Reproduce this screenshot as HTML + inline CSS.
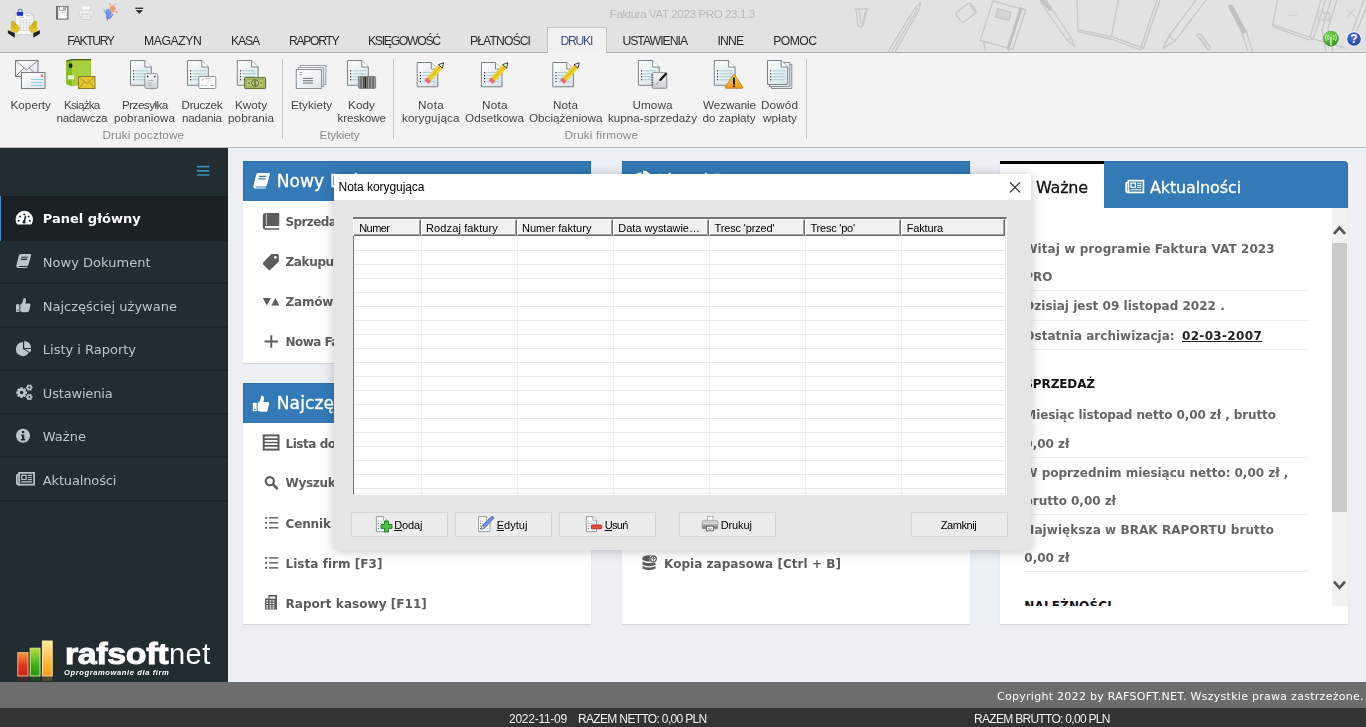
<!DOCTYPE html>
<html lang="pl">
<head>
<meta charset="utf-8">
<title>Faktura VAT 2023 PRO 23.1.3</title>
<style>
*{box-sizing:border-box;margin:0;padding:0}
html,body{width:1366px;height:727px;overflow:hidden}
body{position:relative;background:#ecf0f5;font-family:"Liberation Sans",sans-serif;color:#333}
.t{position:absolute;white-space:nowrap}
.lay{position:absolute;left:0;top:0;width:1366px;height:727px;will-change:transform}
.a{position:absolute}
svg{position:absolute;overflow:visible}
/* window chrome */
#chrome{left:0;top:0;width:1366px;height:53px;background:#e2e2e2;border-bottom:1px solid #ababab}
#tabsel{left:547px;top:27px;width:60px;height:26px;background:#f1f1f1;border:1px solid #c3c3c3;border-bottom:none}
#ribbon{left:0;top:53px;width:1366px;height:95px;background:#f3f3f3;border-bottom:1px solid #bdbdbd}
.rsep{top:59px;width:1px;height:80px;background:#c6c6c6}
/* sidebar */
#side{left:0;top:148px;width:228px;height:534px;background:#222d32}
#act{left:0;top:196px;width:228px;height:45px;background:#1a2226;border-left:1px solid #3c8dbc}
.sl{left:0;width:228px;height:2px;background:#1c262a;margin-top:-1px}
/* boxes */
.box{background:#fff;box-shadow:0 1px 1px rgba(0,0,0,.1)}
.bh{background:#337ab7;border:1px solid #2f6fa8;border-bottom:none}
.hr{height:1px;background:#ececec;left:1024px;width:284px}
/* footer */
#foot{left:0;top:682px;width:1366px;height:26px;background:#6d6d6d}
#status{left:0;top:708px;width:1366px;height:19px;background:#333}
/* dialog */
#dlg{left:334px;top:174px;width:697px;height:376px;background:#e5e5e5;box-shadow:0 1px 11px rgba(0,0,0,.24)}
#dlgt{left:334px;top:174px;width:697px;height:26px;background:#fff}
#grid{left:353px;top:217px;width:654px;height:278px;background:#fff;border:1px solid #757575;border-top-width:2px;border-right-color:#fff;border-bottom-color:#fff}
.hc{top:219px;height:17px;background:#f0f0f0;border-top:1px solid #fff;border-left:1px solid #fff;border-right:1px solid #6a6a6a;border-bottom:1px solid #6a6a6a;box-shadow:inset -1px -1px 0 #a5a5a5}
.vl{top:237px;width:1px;height:256px;background:#eee}
.hl{left:354px;width:651px;height:1px;background:#e8e8e8}
.btn{top:512px;width:97px;height:25px;background:#ebebeb;border:1px solid #d4d4d4}
</style>
</head>
<body>
<div class="a" id="chrome"></div>
<div class="a" id="tabsel"></div>
<svg width="1366" height="53" style="left:0;top:0"><g fill="none" stroke="#c7c8c7" stroke-width="1.3" stroke-linecap="round" stroke-linejoin="round"><path d="M856 9L858 25Q860 29 863 25L867 10M859.5 10L861 23Q862 25 863 22.5L865 12M855 9H868"/><path d="M888 52L915 8L920.5 2.5L919 10L895 52M891.5 52L917.5 9M915 8L919 10"/><rect x="957" y="6.5" width="18.5" height="12" rx="3" transform="rotate(-38 966.4 12.8)"/><path d="M970 5.5L975.5 12.5"/><path d="M993 1L1025.7 9.9L1012.8 49.4L980.2 40.5Z"/><path d="M997.5 8.8L1011 12.5L1009 20.5L995.6 16.8Z" fill="#d3d4d3"/><path d="M1021 8.6L1008.2 48.2" stroke="#c0c1c0" stroke-width="3"/><path d="M983.5 41.5L985.5 51M1008 48L1009.5 52"/><path d="M1046 0L1071 38L1075 46.5L1067 40L1041 3"/><path d="M1042 0L1050 9" stroke="#c2c3c2" stroke-width="4"/><path d="M1067 40L1071 38"/><path d="M1077 0L1078 29.6L1111.5 36.6L1118.4 0M1111.5 36.6L1141 47.4L1157 0M1078 31.5L1111 39L1139.5 49.5L1143.5 48L1160 0M1141 47.4L1143.5 48"/><path d="M1163 48.4L1169 36L1196 0M1163 48.4L1175 41L1206 0M1169 36L1175 41"/><path d="M1197 35L1208 50Q1211 51 1210 47L1201 34.5Q1198.5 33 1197 35ZM1200 37.5L1206.5 46.5"/><path d="M1231 7L1243.5 31" stroke="#c0c1c0" stroke-width="5"/><path d="M1241 30L1248 52M1246 30L1252.5 52"/><path d="M1277.5 0L1272.6 24.7L1310 37.5L1321 0M1272.6 26.7L1309.5 40L1313.5 38.8L1325.5 0M1310 37.5L1313.5 38.8"/><path d="M1313.5 38.8L1345 48M1331 0L1322 30L1326 52M1337 0L1328 28L1333 52M1322 13H1329.5V20H1320.5"/><path d="M1364 0L1352 32M1366 8L1356 33"/></g><g fill="none" stroke="#d0d0d0" stroke-width="1.2"><path d="M1288 15.2H1297"/><rect x="1318" y="11.5" width="6.5" height="8"/><path d="M1346.5 8.5L1355.5 17M1355.5 8.5L1346.5 17"/></g><rect x="15.8" y="13.2" width="16.6" height="21" fill="#fbfbfb" stroke="#c9c9c9" stroke-width="0.6"/><path d="M30.5 14.5L34 15.5V31L32 33" fill="#eee" stroke="#bbb" stroke-width="0.6"/><path d="M18.5 17.3H24M26 15.8H30" stroke="#bbb" stroke-width="1"/><path d="M17.5 20H31M17.5 22.5H31M17.5 25H31M17.5 27.5H31M17.5 30H31M20.5 20V31M23.5 20V31M26.5 20V31M29.3 20V31" stroke="#d4d4d4" stroke-width="0.7"/><path d="M18.3 12.5V10.5A1.9 1.9 0 0 1 22 10.5V12.5" fill="none" stroke="#5a7be0" stroke-width="1.1"/><rect x="16.8" y="12" width="6.3" height="3.8" fill="#1c35c8"/><path d="M11 21.5Q13 19.5 14.5 21.5L20.5 28L17 33L10.5 31Z" fill="#e3bf2c"/><path d="M13 21L16 26M11.5 23L15 28" stroke="#b8951a" stroke-width="0.8"/><path d="M37 21.5Q35 19.5 33.5 21.5L28.5 27.5L31 33L37.5 31Z" fill="#e3bf2c"/><path d="M35 21L32.5 26M36.5 23L33.5 28" stroke="#b8951a" stroke-width="0.8"/><path d="M7.9 30.3L14.8 33V37.8L7.9 33.2Z" fill="#1d1d1d"/><path d="M39.9 30.3L33.4 33V37.8L39.9 33.7Z" fill="#1d1d1d"/><rect x="56.6" y="6.6" width="11.3" height="12.4" fill="#f0f0f0" stroke="#6e6e6e" stroke-width="1.2"/><path d="M57.2 6.6V19" stroke="#6e6e6e" stroke-width="1.6"/><rect x="59.5" y="6.8" width="6.2" height="3.4" fill="#fdfdfd" stroke="#8a8a8a" stroke-width="0.7"/><rect x="63.3" y="7.4" width="1.3" height="2.2" fill="#6e6e6e"/><rect x="59" y="12.3" width="7.6" height="6" fill="#fcfcfc" stroke="#c8c8c8" stroke-width="0.5"/><rect x="82" y="5.8" width="8" height="5" fill="#fbfbfb" stroke="#d4d4d4" stroke-width="0.7"/><rect x="79.2" y="10.2" width="13.8" height="6.4" rx="1.2" fill="#eeeeee" stroke="#cfcfcf" stroke-width="0.8"/><rect x="82" y="14.2" width="8" height="5.4" fill="#fafafa" stroke="#c4c4c4" stroke-width="0.7"/><path d="M83.5 16.2H88.5M83.5 17.8H88.5" stroke="#bdbdbd" stroke-width="0.6"/><path d="M105.5 10.5L109 8.5L112 12.5L110.5 19L106 18.5Z" fill="#6f8fe6" opacity="0.9"/><path d="M104 9.5L106.5 14M108 17L107 20.5M111 17.5L113 14" stroke="#4a67c8" stroke-width="0.9" fill="none"/><path d="M110 6L113.5 5L116 9L113.5 13L110.5 11Z" fill="#f29a6c" opacity="0.95"/><path d="M110.5 5L109.3 3M114.5 5L116 3.5M116 11L117 13" stroke="#e46f8a" stroke-width="0.9" fill="none"/><circle cx="104.8" cy="11.5" r="1.3" fill="#8ad0ee"/><path d="M135.3 8.3H143.3" stroke="#3a3a3a" stroke-width="1.4"/><path d="M135.6 9.9H143L139.3 13.9Z" fill="#3a3a3a"/><defs><radialGradient id="rg" cx="0.4" cy="0.3" r="0.8"><stop offset="0" stop-color="#7ed957"/><stop offset="1" stop-color="#2c8a17"/></radialGradient><radialGradient id="rb" cx="0.4" cy="0.3" r="0.8"><stop offset="0" stop-color="#4a6fe0"/><stop offset="1" stop-color="#22409e"/></radialGradient></defs><circle cx="1330.9" cy="38.6" r="7.8" fill="url(#rg)"/><path d="M1330.9 37V45.5" stroke="#e8ffe0" stroke-width="1.2"/><path d="M1328.3 35Q1327 37.5 1328.3 40M1333.5 35Q1334.8 37.5 1333.5 40M1326.3 34Q1324.5 37.5 1326.3 41M1335.5 34Q1337.3 37.5 1335.5 41" stroke="#d8f8cc" stroke-width="0.9" fill="none"/><circle cx="1354" cy="39" r="7.4" fill="url(#rb)" stroke="#f4f4fa" stroke-width="1.1"/><text x="1354" y="43.4" text-anchor="middle" font-family="Liberation Sans,sans-serif" font-weight="700" font-size="12" fill="#fff">?</text></svg>
<div class="a" id="ribbon"></div>
<div class="a rsep" style="left:282px"></div>
<div class="a rsep" style="left:393px"></div>
<div class="a rsep" style="left:806px"></div>
<svg width="1366" height="148" style="left:0;top:0"><defs><linearGradient id="gd" x1="0" y1="0" x2="1" y2="1"><stop offset="0" stop-color="#fff"/><stop offset="1" stop-color="#d3e1e6"/></linearGradient><linearGradient id="gg" x1="0" y1="0" x2="0" y2="1"><stop offset="0" stop-color="#fdfdfd"/><stop offset="1" stop-color="#c9cdd0"/></linearGradient><linearGradient id="gw" x1="0" y1="0" x2="0" y2="1"><stop offset="0" stop-color="#ffd54a"/><stop offset="1" stop-color="#ef9a13"/></linearGradient><linearGradient id="gc" x1="0" y1="0" x2="1" y2="1"><stop offset="0" stop-color="#fff"/><stop offset="1" stop-color="#dfe5ea"/></linearGradient></defs><rect x="15.5" y="60.5" width="22.5" height="16" fill="url(#gc)" stroke="#7b7b7b"/><path d="M15.5 60.5L26.7 70L38 60.5M15.5 76.5L24 68M38 76.5L29.5 68" fill="none" stroke="#7b7b7b" stroke-width="0.9"/><rect x="21.5" y="72.5" width="23.5" height="16" fill="url(#gc)" stroke="#7b7b7b"/><path d="M31 79.5H43M31 82.5H43M31 85.5H43" stroke="#8fd0e0" stroke-width="1.2"/><rect x="41" y="74.5" width="2" height="2.5" fill="#e57a3a"/><path d="M66.2 61L72 59.6H91V84L72 86.2L66.2 84Z" fill="#a6d13c"/><path d="M66.2 61L72 59.6V86.2L66.2 84Z" fill="#86bb2c"/><path d="M66.2 61L72 59.6H91" stroke="#4a5a22" stroke-width="1.1" fill="none"/><ellipse cx="70.6" cy="65.7" rx="1.9" ry="2.4" fill="#1c230d"/><rect x="67.8" y="75.2" width="6.2" height="4.2" fill="#e4efd0"/><rect x="78.5" y="76.5" width="16.5" height="12" fill="#e8c62b" stroke="#8e7c36"/><path d="M78.5 76.5L86.7 83.5L95 76.5M78.5 88.5L84.5 82M95 88.5L89 82" fill="none" stroke="#a08a2c" stroke-width="0.9"/><path d="M130.5 60.5H144.8L151.3 67.0V85.3H130.5Z" fill="url(#gd)" stroke="#7d8488" stroke-width="1"/><path d="M144.8 60.5V67.0H151.3" fill="#fff" stroke="#7d8488" stroke-width="1" stroke-linejoin="round"/><path d="M135.5 70.8H148.3" stroke="#a9cdd6" stroke-width="1"/><rect x="133.1" y="70.2" width="1.2" height="1.2" fill="#333"/><path d="M135.5 73.8H148.3" stroke="#a9cdd6" stroke-width="1"/><rect x="133.1" y="73.2" width="1.2" height="1.2" fill="#333"/><path d="M135.5 76.7H148.3" stroke="#a9cdd6" stroke-width="1"/><rect x="133.1" y="76.1" width="1.2" height="1.2" fill="#333"/><path d="M135.5 79.7H148.3" stroke="#a9cdd6" stroke-width="1"/><rect x="133.1" y="79.1" width="1.2" height="1.2" fill="#333"/><rect x="144.8" y="73.6" width="13" height="15" rx="1.8" fill="url(#gg)" stroke="#8d9397"/><path d="M147 76L148.5 77.2M155.5 76L154 77.2" stroke="#333" stroke-width="1.2"/><path d="M148 80.5H153M148 82.8H151.5M148 85H152" stroke="#9aa" stroke-width="0.8"/><path d="M187.5 60.5H201.8L208.3 67.0V85.3H187.5Z" fill="url(#gd)" stroke="#7d8488" stroke-width="1"/><path d="M201.8 60.5V67.0H208.3" fill="#fff" stroke="#7d8488" stroke-width="1" stroke-linejoin="round"/><path d="M192.5 70.8H205.3" stroke="#a9cdd6" stroke-width="1"/><rect x="190.1" y="70.2" width="1.2" height="1.2" fill="#333"/><path d="M192.5 73.8H205.3" stroke="#a9cdd6" stroke-width="1"/><rect x="190.1" y="73.2" width="1.2" height="1.2" fill="#333"/><path d="M192.5 76.7H205.3" stroke="#a9cdd6" stroke-width="1"/><rect x="190.1" y="76.1" width="1.2" height="1.2" fill="#333"/><path d="M192.5 79.7H205.3" stroke="#a9cdd6" stroke-width="1"/><rect x="190.1" y="79.1" width="1.2" height="1.2" fill="#333"/><rect x="198.8" y="76.5" width="17" height="12" rx="1" fill="#fff" stroke="#868c90"/><path d="M201 80.5L204 78.5M205 78.5H211M201 85.5H207M210 85.5H214" stroke="#aab4ba" stroke-width="0.8" fill="none"/><circle cx="209.5" cy="81.5" r="1.6" fill="none" stroke="#c2cad0" stroke-width="0.7"/><path d="M237.3 60.5H251.6L258.1 67.0V85.3H237.3Z" fill="url(#gd)" stroke="#7d8488" stroke-width="1"/><path d="M251.6 60.5V67.0H258.1" fill="#fff" stroke="#7d8488" stroke-width="1" stroke-linejoin="round"/><path d="M242.3 70.8H255.1" stroke="#a9cdd6" stroke-width="1"/><rect x="239.9" y="70.2" width="1.2" height="1.2" fill="#333"/><path d="M242.3 73.8H255.1" stroke="#a9cdd6" stroke-width="1"/><rect x="239.9" y="73.2" width="1.2" height="1.2" fill="#333"/><path d="M242.3 76.7H255.1" stroke="#a9cdd6" stroke-width="1"/><rect x="239.9" y="76.1" width="1.2" height="1.2" fill="#333"/><path d="M242.3 79.7H255.1" stroke="#a9cdd6" stroke-width="1"/><rect x="239.9" y="79.1" width="1.2" height="1.2" fill="#333"/><rect x="244.6" y="77.6" width="21" height="11" rx="0.8" fill="#b5c674" stroke="#5b6b2c"/><rect x="246.2" y="79.2" width="17.8" height="7.8" fill="none" stroke="#8ea04c" stroke-width="0.8"/><circle cx="255.1" cy="83.1" r="3.4" fill="#c9d78c" stroke="#4c5c22" stroke-width="0.9"/><path d="M256.3 81.7C255 80.9 253.9 81.6 254.3 82.6C254.7 83.4 256.2 83.2 256.1 84.3C256 85.2 254.7 85.3 253.8 84.6M255.1 80.6V85.7" fill="none" stroke="#3e4d18" stroke-width="0.7"/><path d="M248 83.1H250M260.2 83.1H262.2" stroke="#5b6b2c" stroke-width="1"/><rect x="300.5" y="65.5" width="25.3" height="19" fill="url(#gc)" stroke="#9aa0a5"/><rect x="298.3" y="67.5" width="25.3" height="19" fill="url(#gc)" stroke="#9aa0a5"/><rect x="296.3" y="69.5" width="25.3" height="19" fill="url(#gc)" stroke="#8a9095"/><path d="M303 78.4H313M303 80.7H313M303 83H313" stroke="#5f6367" stroke-width="0.9"/><path d="M299 72.6H302.5M299 74.6H302" stroke="#8c9297" stroke-width="0.7"/><path d="M347.5 60.5H361.8L368.3 67.0V85.3H347.5Z" fill="url(#gd)" stroke="#7d8488" stroke-width="1"/><path d="M361.8 60.5V67.0H368.3" fill="#fff" stroke="#7d8488" stroke-width="1" stroke-linejoin="round"/><path d="M352.5 70.8H365.3" stroke="#a9cdd6" stroke-width="1"/><rect x="350.1" y="70.2" width="1.2" height="1.2" fill="#333"/><path d="M352.5 73.8H365.3" stroke="#a9cdd6" stroke-width="1"/><rect x="350.1" y="73.2" width="1.2" height="1.2" fill="#333"/><path d="M352.5 76.7H365.3" stroke="#a9cdd6" stroke-width="1"/><rect x="350.1" y="76.1" width="1.2" height="1.2" fill="#333"/><path d="M352.5 79.7H365.3" stroke="#a9cdd6" stroke-width="1"/><rect x="350.1" y="79.1" width="1.2" height="1.2" fill="#333"/><rect x="358.4" y="76.4" width="17.2" height="12" rx="1.2" fill="#9b9b9b" stroke="#808080"/><path d="M361 77V88M363.5 77V88M367.3 77V88M370 77V88M373 77V88" stroke="#4a4a4a" stroke-width="1"/><path d="M365.3 77V88" stroke="#222" stroke-width="1.6"/><path d="M417.2 62.5H431.3L437.8 69.0V86.8H417.2Z" fill="url(#gd)" stroke="#7d8488" stroke-width="1"/><path d="M431.3 62.5V69.0H437.8" fill="#fff" stroke="#7d8488" stroke-width="1" stroke-linejoin="round"/><path d="M422.2 72.6H434.8" stroke="#a9cdd6" stroke-width="1"/><rect x="419.8" y="72.0" width="1.2" height="1.2" fill="#333"/><path d="M422.2 75.6H434.8" stroke="#a9cdd6" stroke-width="1"/><rect x="419.8" y="75.0" width="1.2" height="1.2" fill="#333"/><path d="M422.2 78.6H434.8" stroke="#a9cdd6" stroke-width="1"/><rect x="419.8" y="78.0" width="1.2" height="1.2" fill="#333"/><path d="M422.2 81.6H434.8" stroke="#a9cdd6" stroke-width="1"/><rect x="419.8" y="81.0" width="1.2" height="1.2" fill="#333"/><path d="M424.4 80.2L428.5 84L431.2 81L427.2 77.2Z" fill="#ef6a7e"/><path d="M427.2 77.2L431.2 81L442.4 68.2L438.5 64.6Z" fill="#ecd22a"/><path d="M428.9 79.3L440.5 66.3" stroke="#d1b11c" stroke-width="1"/><path d="M438.5 64.6L442.4 68.2L443.6 62.8Z" fill="#fff" stroke="#222" stroke-width="0.9" stroke-linejoin="round"/><path d="M481.4 62.5H495.5L502.0 69.0V86.8H481.4Z" fill="url(#gd)" stroke="#7d8488" stroke-width="1"/><path d="M495.5 62.5V69.0H502.0" fill="#fff" stroke="#7d8488" stroke-width="1" stroke-linejoin="round"/><path d="M486.4 72.6H499.0" stroke="#a9cdd6" stroke-width="1"/><rect x="484.0" y="72.0" width="1.2" height="1.2" fill="#333"/><path d="M486.4 75.6H499.0" stroke="#a9cdd6" stroke-width="1"/><rect x="484.0" y="75.0" width="1.2" height="1.2" fill="#333"/><path d="M486.4 78.6H499.0" stroke="#a9cdd6" stroke-width="1"/><rect x="484.0" y="78.0" width="1.2" height="1.2" fill="#333"/><path d="M486.4 81.6H499.0" stroke="#a9cdd6" stroke-width="1"/><rect x="484.0" y="81.0" width="1.2" height="1.2" fill="#333"/><path d="M488.6 80.2L492.7 84L495.4 81L491.4 77.2Z" fill="#ef6a7e"/><path d="M491.4 77.2L495.4 81L506.6 68.2L502.7 64.6Z" fill="#ecd22a"/><path d="M493.1 79.3L504.7 66.3" stroke="#d1b11c" stroke-width="1"/><path d="M502.7 64.6L506.6 68.2L507.8 62.8Z" fill="#fff" stroke="#222" stroke-width="0.9" stroke-linejoin="round"/><path d="M552.8 62.5H566.9L573.4 69.0V86.8H552.8Z" fill="url(#gd)" stroke="#7d8488" stroke-width="1"/><path d="M566.9 62.5V69.0H573.4" fill="#fff" stroke="#7d8488" stroke-width="1" stroke-linejoin="round"/><path d="M557.8 72.6H570.4" stroke="#a9cdd6" stroke-width="1"/><rect x="555.4" y="72.0" width="1.2" height="1.2" fill="#333"/><path d="M557.8 75.6H570.4" stroke="#a9cdd6" stroke-width="1"/><rect x="555.4" y="75.0" width="1.2" height="1.2" fill="#333"/><path d="M557.8 78.6H570.4" stroke="#a9cdd6" stroke-width="1"/><rect x="555.4" y="78.0" width="1.2" height="1.2" fill="#333"/><path d="M557.8 81.6H570.4" stroke="#a9cdd6" stroke-width="1"/><rect x="555.4" y="81.0" width="1.2" height="1.2" fill="#333"/><path d="M560.0 80.2L564.1 84L566.8 81L562.8 77.2Z" fill="#ef6a7e"/><path d="M562.8 77.2L566.8 81L578.0 68.2L574.1 64.6Z" fill="#ecd22a"/><path d="M564.5 79.3L576.1 66.3" stroke="#d1b11c" stroke-width="1"/><path d="M574.1 64.6L578.0 68.2L579.2 62.8Z" fill="#fff" stroke="#222" stroke-width="0.9" stroke-linejoin="round"/><path d="M638.4 60.5H652.7L659.2 67.0V85.3H638.4Z" fill="url(#gd)" stroke="#7d8488" stroke-width="1"/><path d="M652.7 60.5V67.0H659.2" fill="#fff" stroke="#7d8488" stroke-width="1" stroke-linejoin="round"/><path d="M643.4 70.8H656.2" stroke="#a9cdd6" stroke-width="1"/><rect x="641.0" y="70.2" width="1.2" height="1.2" fill="#333"/><path d="M643.4 73.8H656.2" stroke="#a9cdd6" stroke-width="1"/><rect x="641.0" y="73.2" width="1.2" height="1.2" fill="#333"/><path d="M643.4 76.7H656.2" stroke="#a9cdd6" stroke-width="1"/><rect x="641.0" y="76.1" width="1.2" height="1.2" fill="#333"/><path d="M643.4 79.7H656.2" stroke="#a9cdd6" stroke-width="1"/><rect x="641.0" y="79.1" width="1.2" height="1.2" fill="#333"/><rect x="652.2" y="72.7" width="14.6" height="15.6" rx="1" fill="url(#gg)" stroke="#8a8f93"/><path d="M651.3 75H653.5M651.3 77.5H653.5M651.3 80H653.5M651.3 82.5H653.5M651.3 85H653.5" stroke="#555" stroke-width="0.8"/><path d="M656 85L660.5 79.5" stroke="#99a" stroke-width="0.9"/><path d="M660.5 79.8L665.8 74" stroke="#111" stroke-width="2.4" stroke-linecap="round"/><path d="M714.3 60.5H728.6L735.1 67.0V85.3H714.3Z" fill="url(#gd)" stroke="#7d8488" stroke-width="1"/><path d="M728.6 60.5V67.0H735.1" fill="#fff" stroke="#7d8488" stroke-width="1" stroke-linejoin="round"/><path d="M719.3 70.8H732.1" stroke="#a9cdd6" stroke-width="1"/><rect x="716.9" y="70.2" width="1.2" height="1.2" fill="#333"/><path d="M719.3 73.8H732.1" stroke="#a9cdd6" stroke-width="1"/><rect x="716.9" y="73.2" width="1.2" height="1.2" fill="#333"/><path d="M719.3 76.7H732.1" stroke="#a9cdd6" stroke-width="1"/><rect x="716.9" y="76.1" width="1.2" height="1.2" fill="#333"/><path d="M719.3 79.7H732.1" stroke="#a9cdd6" stroke-width="1"/><rect x="716.9" y="79.1" width="1.2" height="1.2" fill="#333"/><path d="M734 74L742.8 87.2Q743.2 88.3 742 88.3H726Q724.8 88.3 725.3 87.2Z" fill="url(#gw)" stroke="#b7791a" stroke-width="0.8" stroke-linejoin="round"/><path d="M734 78.3V83.8" stroke="#1a1a1a" stroke-width="2" stroke-linecap="round"/><circle cx="734" cy="86.2" r="1.05" fill="#1a1a1a"/><path d="M771.5 64.5H791.8V88.5H771.5Z" fill="#dfe8ec" stroke="#8a9196"/><path d="M769.5 62.5H789.8V86.5H769.5Z" fill="#e9eff2" stroke="#8a9196"/><path d="M767.5 60.5H781.2L787.7 67.0V84.5H767.5Z" fill="url(#gd)" stroke="#7d8488" stroke-width="1"/><path d="M781.2 60.5V67.0H787.7" fill="#fff" stroke="#7d8488" stroke-width="1" stroke-linejoin="round"/><path d="M772.5 70.8H784.7" stroke="#a9cdd6" stroke-width="1"/><rect x="770.1" y="70.2" width="1.2" height="1.2" fill="#333"/><path d="M772.5 73.8H784.7" stroke="#a9cdd6" stroke-width="1"/><rect x="770.1" y="73.2" width="1.2" height="1.2" fill="#333"/><path d="M772.5 76.7H784.7" stroke="#a9cdd6" stroke-width="1"/><rect x="770.1" y="76.1" width="1.2" height="1.2" fill="#333"/><path d="M772.5 79.7H784.7" stroke="#a9cdd6" stroke-width="1"/><rect x="770.1" y="79.1" width="1.2" height="1.2" fill="#333"/></svg>
<div class="a" id="side"></div>
<div class="a" id="act"></div>
<div class="a sl" style="top:283px"></div>
<div class="a sl" style="top:327px"></div>
<div class="a sl" style="top:370px"></div>
<div class="a sl" style="top:414px"></div>
<div class="a sl" style="top:457px"></div>
<div class="a sl" style="top:501px"></div>
<svg width="228" height="534" style="left:0;top:148px"><g transform="translate(0 -148)"><g transform="translate(16.0 211.5) scale(1.000)"><path d="M1.4 12.6A8.3 8.3 0 1 1 15.2 12.6Z" fill="#fff" stroke="#fff" stroke-width="0.8" stroke-linejoin="round"/><circle cx="2.7" cy="9.3" r="1.0" fill="#1a2226"/><circle cx="4" cy="4.9" r="1.0" fill="#1a2226"/><circle cx="8.3" cy="2.9" r="1.0" fill="#1a2226"/><circle cx="12.6" cy="4.9" r="1.0" fill="#1a2226"/><circle cx="13.9" cy="9.3" r="1.0" fill="#1a2226"/><path d="M8.1 10.3L9.5 5" stroke="#1a2226" stroke-width="1.5" stroke-linecap="round"/><circle cx="8.1" cy="10.4" r="1.6" fill="#1a2226"/></g><g transform="translate(16.2 254.0) scale(1.000)"><path d="M4.6 0H14Q15.3 0 14.9 1.3L12.2 11Q11.8 12.1 10.6 12.1H3.2Q2.3 12.3 2.5 13H10.8L11.3 12.9L10.9 14H2.4Q-0.3 14 0.2 11.6L2.6 1.8Q3.1 0 4.6 0Z" fill="#b8c7ce"/><path d="M5.2 3.2H11.6M4.6 5.4H11" stroke="#222d32" stroke-width="1.1"/></g><g transform="translate(16.0 298.0) scale(1.000)"><rect x="0" y="6.3" width="3.4" height="7.6" rx="0.5" fill="#b8c7ce"/><circle cx="1.7" cy="12.2" r="0.6" fill="#222d32"/><path d="M4.3 6.8C6.5 5.3 7 3.2 7.3 0.7C7.5 -0.3 9.9 -0.2 10 2.3C10 3.8 9.5 4.8 9.2 5.6H13Q14.6 5.7 14.5 7.2Q14.5 8 13.9 8.5Q14.4 9.5 13.6 10.4Q13.9 11.4 13.1 12.2Q13.2 14.3 11 14.3H8C6.5 14.3 5.5 13.7 4.3 13.4Z" fill="#b8c7ce"/></g><g transform="translate(16.0 341.0) scale(1.000)"><path d="M7 1.2V8L12.8 11.6A6.9 6.9 0 1 1 7 1.2Z" fill="#b8c7ce"/><path d="M8.2 0A6.9 6.9 0 0 1 15.1 6.9H8.2Z" fill="#b8c7ce"/><path d="M8.6 8.1H15.2A6.9 6.9 0 0 1 14.1 11.5Z" fill="#b8c7ce"/></g><g transform="translate(16.0 384.0) scale(1.000)"><circle cx="5.6" cy="8.6" r="4.18" fill="#b8c7ce"/><path d="M8.79 8.60L10.99 8.60" stroke="#b8c7ce" stroke-width="2.44"/><path d="M7.86 10.86L9.41 12.41" stroke="#b8c7ce" stroke-width="2.44"/><path d="M5.60 11.79L5.60 13.99" stroke="#b8c7ce" stroke-width="2.44"/><path d="M3.34 10.86L1.79 12.41" stroke="#b8c7ce" stroke-width="2.44"/><path d="M2.41 8.60L0.21 8.60" stroke="#b8c7ce" stroke-width="2.44"/><path d="M3.34 6.34L1.79 4.79" stroke="#b8c7ce" stroke-width="2.44"/><path d="M5.60 5.41L5.60 3.21" stroke="#b8c7ce" stroke-width="2.44"/><path d="M7.86 6.34L9.41 4.79" stroke="#b8c7ce" stroke-width="2.44"/><circle cx="5.6" cy="8.6" r="1.74" fill="#222d32"/><circle cx="13.3" cy="3.6" r="2.59" fill="#b8c7ce"/><path d="M15.28 3.60L16.65 3.60" stroke="#b8c7ce" stroke-width="1.51"/><path d="M14.29 5.31L14.97 6.50" stroke="#b8c7ce" stroke-width="1.51"/><path d="M12.31 5.31L11.63 6.50" stroke="#b8c7ce" stroke-width="1.51"/><path d="M11.32 3.60L9.95 3.60" stroke="#b8c7ce" stroke-width="1.51"/><path d="M12.31 1.89L11.63 0.70" stroke="#b8c7ce" stroke-width="1.51"/><path d="M14.29 1.89L14.97 0.70" stroke="#b8c7ce" stroke-width="1.51"/><circle cx="13.3" cy="3.6" r="1.08" fill="#222d32"/><circle cx="13.3" cy="13" r="2.59" fill="#b8c7ce"/><path d="M15.28 13.00L16.65 13.00" stroke="#b8c7ce" stroke-width="1.51"/><path d="M14.29 14.71L14.97 15.90" stroke="#b8c7ce" stroke-width="1.51"/><path d="M12.31 14.71L11.63 15.90" stroke="#b8c7ce" stroke-width="1.51"/><path d="M11.32 13.00L9.95 13.00" stroke="#b8c7ce" stroke-width="1.51"/><path d="M12.31 11.29L11.63 10.10" stroke="#b8c7ce" stroke-width="1.51"/><path d="M14.29 11.29L14.97 10.10" stroke="#b8c7ce" stroke-width="1.51"/><circle cx="13.3" cy="13" r="1.08" fill="#222d32"/></g><g transform="translate(16.0 428.8) scale(1.000)"><circle cx="7" cy="7" r="7" fill="#b8c7ce"/><rect x="5.9" y="2.2" width="2.4" height="2.1" fill="#222d32"/><path d="M5.2 5.8H8.3V10.3H9.3V11.8H4.9V10.3H5.9V7.3H5.2Z" fill="#222d32"/></g><g transform="translate(16.0 472.0) scale(1.000)"><rect x="3.1" y="0.85" width="15" height="11.8" fill="none" stroke="#b8c7ce" stroke-width="1.7"/><path d="M3 2.7H1.8Q0.85 2.7 0.85 3.7V10.8Q0.85 12.65 2.7 12.65H4" fill="none" stroke="#b8c7ce" stroke-width="1.7"/><rect x="5.7" y="3.3" width="4.4" height="4.2" fill="none" stroke="#b8c7ce" stroke-width="1.2"/><path d="M11.8 3.4H16M11.8 5.5H16M11.8 7.6H16M5.2 9.9H16" stroke="#b8c7ce" stroke-width="1.15"/></g><path d="M197 166.6H209.3M197 170.8H209.3M197 175H209.3" stroke="#3c8dbc" stroke-width="1.7"/><defs><linearGradient id="lr" x1="0" y1="0" x2="0" y2="1"><stop offset="0" stop-color="#f59a3a"/><stop offset="0.55" stop-color="#e0341e"/><stop offset="1" stop-color="#c8201a"/></linearGradient><linearGradient id="lg" x1="0" y1="0" x2="0" y2="1"><stop offset="0" stop-color="#b7e03a"/><stop offset="0.6" stop-color="#3fae1c"/><stop offset="1" stop-color="#2a9012"/></linearGradient><linearGradient id="ly" x1="0" y1="0" x2="0" y2="1"><stop offset="0" stop-color="#ffe9a0"/><stop offset="0.6" stop-color="#fdbb3c"/><stop offset="1" stop-color="#f39a1c"/></linearGradient></defs><rect x="17.8" y="652.6" width="10.2" height="23.4" fill="url(#lr)" stroke="#f7b27a" stroke-width="1"/><rect x="30.2" y="648.2" width="9.8" height="27.8" fill="url(#lg)" stroke="#d3ec8c" stroke-width="1"/><rect x="42.4" y="641" width="9.8" height="35" fill="url(#ly)" stroke="#ffe3a0" stroke-width="1"/><rect x="17.8" y="677" width="10.2" height="4" fill="#c8201a" opacity="0.25"/><rect x="30.2" y="677" width="9.8" height="4" fill="#2a9012" opacity="0.25"/><rect x="42.4" y="677" width="9.8" height="4" fill="#f39a1c" opacity="0.25"/></g></svg>
<!-- left boxes -->
<div class="a box" style="left:243px;top:161px;width:348px;height:202px"></div>
<div class="a bh" style="left:243px;top:161px;width:348px;height:40px"></div>
<div class="a box" style="left:243px;top:383px;width:348px;height:241px"></div>
<div class="a bh" style="left:243px;top:383px;width:348px;height:40px"></div>
<!-- middle box -->
<div class="a box" style="left:622px;top:161px;width:348px;height:463px"></div>
<div class="a bh" style="left:622px;top:161px;width:348px;height:40px"></div>
<!-- right box -->
<div class="a box" style="left:1000px;top:161px;width:348px;height:463px"></div>
<div class="a bh" style="left:1104px;top:161px;width:244px;height:47px;border-radius:0 4px 0 0;border-left:none"></div>
<div class="a" style="left:1000px;top:161px;width:104px;height:3px;background:#000"></div>
<div class="a" style="left:1332px;top:208px;width:16px;height:398px;background:#f1f1f1"></div>
<div class="a" style="left:1332px;top:243px;width:15px;height:269px;background:#cacaca"></div>
<div class="a hr" style="top:290px"></div>
<div class="a hr" style="top:320px"></div>
<div class="a hr" style="top:349px"></div>
<div class="a hr" style="top:457px"></div>
<div class="a hr" style="top:514px"></div>
<div class="a hr" style="top:571px"></div>
<div class="a" style="left:1020px;top:590px;width:200px;height:16px;overflow:hidden"><span class="t" style='left:4.3px;top:8.5px;font:700 12px/15px "DejaVu Sans","Liberation Sans",sans-serif;color:#111;letter-spacing:0.15px'>NALEŻNOŚCI</span></div>
<svg width="1366" height="727" style="left:0;top:0"><g transform="translate(253.2 172.9) scale(1.120)"><path d="M4.6 0H14Q15.3 0 14.9 1.3L12.2 11Q11.8 12.1 10.6 12.1H3.2Q2.3 12.3 2.5 13H10.8L11.3 12.9L10.9 14H2.4Q-0.3 14 0.2 11.6L2.6 1.8Q3.1 0 4.6 0Z" fill="#fff"/><path d="M5.2 3.2H11.6M4.6 5.4H11" stroke="#337ab7" stroke-width="1.1"/></g><g transform="translate(252.8 395.6) scale(1.130)"><rect x="0" y="6.3" width="3.4" height="7.6" rx="0.5" fill="#fff"/><circle cx="1.7" cy="12.2" r="0.6" fill="#337ab7"/><path d="M4.3 6.8C6.5 5.3 7 3.2 7.3 0.7C7.5 -0.3 9.9 -0.2 10 2.3C10 3.8 9.5 4.8 9.2 5.6H13Q14.6 5.7 14.5 7.2Q14.5 8 13.9 8.5Q14.4 9.5 13.6 10.4Q13.9 11.4 13.1 12.2Q13.2 14.3 11 14.3H8C6.5 14.3 5.5 13.7 4.3 13.4Z" fill="#fff"/></g><g transform="translate(632.6 170.6) scale(1.280)"><path d="M7 1.2V8L12.8 11.6A6.9 6.9 0 1 1 7 1.2Z" fill="#fff"/><path d="M8.2 0A6.9 6.9 0 0 1 15.1 6.9H8.2Z" fill="#fff"/><path d="M8.6 8.1H15.2A6.9 6.9 0 0 1 14.1 11.5Z" fill="#fff"/></g><g transform="translate(1125.3 179.8) scale(1.000)"><rect x="3.1" y="0.85" width="15" height="11.8" fill="none" stroke="#fff" stroke-width="1.7"/><path d="M3 2.7H1.8Q0.85 2.7 0.85 3.7V10.8Q0.85 12.65 2.7 12.65H4" fill="none" stroke="#fff" stroke-width="1.7"/><rect x="5.7" y="3.3" width="4.4" height="4.2" fill="none" stroke="#fff" stroke-width="1.2"/><path d="M11.8 3.4H16M11.8 5.5H16M11.8 7.6H16M5.2 9.9H16" stroke="#fff" stroke-width="1.15"/></g><g transform="translate(262.8 213.0) scale(1.000)"><path d="M2.8 0H15.4Q16.5 0 16.5 1.1V11.9Q16.5 13 15.4 13H3.2Q1.9 13.1 1.9 14.2Q1.9 15.2 3.2 15.2H16.5V16.7H2.8Q0 16.7 0 14V2.8Q0 0 2.8 0Z" fill="#5c5c5c"/><path d="M3.6 0.5V12.6" stroke="#fff" stroke-width="0.7"/></g><g transform="translate(262.8 254.0) scale(1.000)"><path d="M8.6 0H14.6Q16 0 16 1.4V7.4L7.6 15.8Q6.6 16.6 5.7 15.8L0.5 10.4Q-0.3 9.4 0.5 8.5Z" fill="#5c5c5c"/><circle cx="12.6" cy="3.4" r="1.4" fill="#fff"/></g><g transform="translate(262.8 298.0) scale(1.000)"><path d="M0 0H8L4 7.5Z" fill="#5c5c5c"/><path d="M8.6 7.5H16.6L12.6 0Z" fill="#5c5c5c"/></g><g transform="translate(264.6 335.3) scale(1.000)"><path d="M6.7 0V12.4M0 6.2H13.4" stroke="#5c5c5c" stroke-width="1.9"/></g><g transform="translate(262.7 434.4) scale(1.000)"><rect x="1" y="1" width="14.8" height="14.2" fill="none" stroke="#5c5c5c" stroke-width="2"/><path d="M1 4.7H16M1 8.1H16M1 11.5H16" stroke="#5c5c5c" stroke-width="1.7"/></g><g transform="translate(264.6 476.0) scale(1.000)"><circle cx="5.2" cy="5.2" r="4.1" fill="none" stroke="#5c5c5c" stroke-width="2.1"/><path d="M8.4 8.4L12.4 12.4" stroke="#5c5c5c" stroke-width="2.6" stroke-linecap="round"/></g><g transform="translate(265.0 516.7) scale(1.000)"><circle cx="1.1" cy="1.1" r="1.1" fill="#5c5c5c"/><path d="M4 1.1H13.3" stroke="#5c5c5c" stroke-width="1.4"/><circle cx="1.1" cy="6.1" r="1.1" fill="#5c5c5c"/><path d="M4 6.1H13.3" stroke="#5c5c5c" stroke-width="1.4"/><circle cx="1.1" cy="11.1" r="1.1" fill="#5c5c5c"/><path d="M4 11.1H13.3" stroke="#5c5c5c" stroke-width="1.4"/></g><g transform="translate(265.0 556.8) scale(1.000)"><circle cx="1.1" cy="1.1" r="1.1" fill="#5c5c5c"/><path d="M4 1.1H13.3" stroke="#5c5c5c" stroke-width="1.4"/><circle cx="1.1" cy="6.1" r="1.1" fill="#5c5c5c"/><path d="M4 6.1H13.3" stroke="#5c5c5c" stroke-width="1.4"/><circle cx="1.1" cy="11.1" r="1.1" fill="#5c5c5c"/><path d="M4 11.1H13.3" stroke="#5c5c5c" stroke-width="1.4"/></g><g transform="translate(265.0 595.0) scale(1.000)"><path d="M0 3.6H3.4V0H12V14.6H0Z" fill="#5c5c5c"/><rect x="1.3" y="5.2" width="1.7" height="1.3" fill="#fff"/><rect x="1.3" y="7.7" width="1.7" height="1.3" fill="#fff"/><rect x="1.3" y="10.2" width="1.7" height="1.3" fill="#fff"/><rect x="1.3" y="12.3" width="1.7" height="1.3" fill="#fff"/><rect x="4.6" y="5.2" width="1.7" height="1.3" fill="#fff"/><rect x="4.6" y="7.7" width="1.7" height="1.3" fill="#fff"/><rect x="4.6" y="10.2" width="1.7" height="1.3" fill="#fff"/><rect x="4.6" y="12.3" width="1.7" height="1.3" fill="#fff"/><rect x="7.6" y="5.2" width="1.7" height="1.3" fill="#fff"/><rect x="7.6" y="7.7" width="1.7" height="1.3" fill="#fff"/><rect x="7.6" y="10.2" width="1.7" height="1.3" fill="#fff"/><rect x="7.6" y="12.3" width="1.7" height="1.3" fill="#fff"/><rect x="4.6" y="1.6" width="5.6" height="2" fill="#fff"/></g><g transform="translate(642.5 555.2) scale(1.000)"><ellipse cx="6.5" cy="2.5" rx="6.5" ry="2.5" fill="#5c5c5c"/><path d="M0 2.5V4.9Q6.5 7.9 13 4.9V2.5Z" fill="#5c5c5c"/><path d="M0 6.3Q6.5 9.3 13 6.3V9.5Q6.5 12.5 0 9.5Z" fill="#5c5c5c"/><path d="M0 10.9Q6.5 13.9 13 10.9V13.3Q6.5 16.3 0 13.3Z" fill="#5c5c5c"/><circle cx="10.9" cy="3.7" r="3.9" fill="#fff"/><circle cx="10.9" cy="3.7" r="2.9" fill="none" stroke="#5c5c5c" stroke-width="1.3"/><path d="M10.9 5.3V2.3M9.6 3.5L10.9 2.2L12.2 3.5" stroke="#5c5c5c" stroke-width="1" fill="none"/></g><path d="M1334 233.8L1339.5 227.6L1345 233.8" fill="none" stroke="#555" stroke-width="2.7"/><path d="M1334 581.6L1339.5 587.8L1345 581.6" fill="none" stroke="#555" stroke-width="2.7"/></svg>
<div class="a" id="foot"></div>
<div class="a" id="status"></div>
<div class="lay">
<span class="t" style='left:609.8px;top:7px;font:400 11.7px/13px "Liberation Sans",sans-serif;color:#b9b9b9;letter-spacing:-0.45px;'>Faktura VAT 2023 PRO 23.1.3</span>
<span class="t" style='left:67.3px;top:34px;font:400 12.2px/14px "Liberation Sans",sans-serif;color:#2b2b2b;letter-spacing:-1.38px;'>FAKTURY</span>
<span class="t" style='left:144.0px;top:34px;font:400 12.2px/14px "Liberation Sans",sans-serif;color:#2b2b2b;letter-spacing:-0.43px;'>MAGAZYN</span>
<span class="t" style='left:231.0px;top:34px;font:400 12.2px/14px "Liberation Sans",sans-serif;color:#2b2b2b;letter-spacing:-1.15px;'>KASA</span>
<span class="t" style='left:289.0px;top:34px;font:400 12.2px/14px "Liberation Sans",sans-serif;color:#2b2b2b;letter-spacing:-1.34px;'>RAPORTY</span>
<span class="t" style='left:368.0px;top:34px;font:400 12.2px/14px "Liberation Sans",sans-serif;color:#2b2b2b;letter-spacing:-1.28px;'>KSIĘGOWOŚĆ</span>
<span class="t" style='left:470.0px;top:34px;font:400 12.2px/14px "Liberation Sans",sans-serif;color:#2b2b2b;letter-spacing:-0.90px;'>PŁATNOŚCI</span>
<span class="t" style='left:622.4px;top:34px;font:400 12.2px/14px "Liberation Sans",sans-serif;color:#2b2b2b;letter-spacing:-0.98px;'>USTAWIENIA</span>
<span class="t" style='left:717.5px;top:34px;font:400 12.2px/14px "Liberation Sans",sans-serif;color:#2b2b2b;letter-spacing:-0.81px;'>INNE</span>
<span class="t" style='left:773.3px;top:34px;font:400 12.2px/14px "Liberation Sans",sans-serif;color:#2b2b2b;letter-spacing:-0.59px;'>POMOC</span>
<span class="t" style='left:560.4px;top:34px;font:400 12.2px/14px "Liberation Sans",sans-serif;color:#3b5089;letter-spacing:-1.25px;'>DRUKI</span>
<span class="t" style='left:10.5px;top:98px;font:400 11.7px/13px "Liberation Sans",sans-serif;color:#444;letter-spacing:0.03px;'>Koperty</span>
<span class="t" style='left:64.0px;top:98px;font:400 11.7px/13px "Liberation Sans",sans-serif;color:#444;letter-spacing:-0.76px;'>Książka</span>
<span class="t" style='left:56.5px;top:111px;font:400 11.7px/13px "Liberation Sans",sans-serif;color:#444;letter-spacing:-0.22px;'>nadawcza</span>
<span class="t" style='left:122.0px;top:98px;font:400 11.7px/13px "Liberation Sans",sans-serif;color:#444;letter-spacing:-0.55px;'>Przesyłka</span>
<span class="t" style='left:114.0px;top:111px;font:400 11.7px/13px "Liberation Sans",sans-serif;color:#444;letter-spacing:0.06px;'>pobraniowa</span>
<span class="t" style='left:181.5px;top:98px;font:400 11.7px/13px "Liberation Sans",sans-serif;color:#444;letter-spacing:-0.29px;'>Druczek</span>
<span class="t" style='left:182.0px;top:111px;font:400 11.7px/13px "Liberation Sans",sans-serif;color:#444;letter-spacing:-0.25px;'>nadania</span>
<span class="t" style='left:235.0px;top:98px;font:400 11.7px/13px "Liberation Sans",sans-serif;color:#444;letter-spacing:0.04px;'>Kwoty</span>
<span class="t" style='left:228.0px;top:111px;font:400 11.7px/13px "Liberation Sans",sans-serif;color:#444;letter-spacing:0.07px;'>pobrania</span>
<span class="t" style='left:291.0px;top:98px;font:400 11.7px/13px "Liberation Sans",sans-serif;color:#444;letter-spacing:0.01px;'>Etykiety</span>
<span class="t" style='left:348.0px;top:98px;font:400 11.7px/13px "Liberation Sans",sans-serif;color:#444;letter-spacing:0.10px;'>Kody</span>
<span class="t" style='left:337.5px;top:111px;font:400 11.7px/13px "Liberation Sans",sans-serif;color:#444;letter-spacing:-0.12px;'>kreskowe</span>
<span class="t" style='left:418.0px;top:98px;font:400 11.7px/13px "Liberation Sans",sans-serif;color:#444;letter-spacing:0.37px;'>Nota</span>
<span class="t" style='left:402.0px;top:111px;font:400 11.7px/13px "Liberation Sans",sans-serif;color:#444;letter-spacing:0.10px;'>korygująca</span>
<span class="t" style='left:482.0px;top:98px;font:400 11.7px/13px "Liberation Sans",sans-serif;color:#444;letter-spacing:0.23px;'>Nota</span>
<span class="t" style='left:465.0px;top:111px;font:400 11.7px/13px "Liberation Sans",sans-serif;color:#444;letter-spacing:0.06px;'>Odsetkowa</span>
<span class="t" style='left:553.0px;top:98px;font:400 11.7px/13px "Liberation Sans",sans-serif;color:#444;letter-spacing:0.08px;'>Nota</span>
<span class="t" style='left:529.0px;top:111px;font:400 11.7px/13px "Liberation Sans",sans-serif;color:#444;letter-spacing:0.01px;'>Obciążeniowa</span>
<span class="t" style='left:632.5px;top:98px;font:400 11.7px/13px "Liberation Sans",sans-serif;color:#444;letter-spacing:0.08px;'>Umowa</span>
<span class="t" style='left:608.0px;top:111px;font:400 11.7px/13px "Liberation Sans",sans-serif;color:#444;'>kupna-sprzedaży</span>
<span class="t" style='left:703.0px;top:98px;font:400 11.7px/13px "Liberation Sans",sans-serif;color:#444;letter-spacing:-0.09px;'>Wezwanie</span>
<span class="t" style='left:702.5px;top:111px;font:400 11.7px/13px "Liberation Sans",sans-serif;color:#444;letter-spacing:-0.03px;'>do zapłaty</span>
<span class="t" style='left:761.0px;top:98px;font:400 11.7px/13px "Liberation Sans",sans-serif;color:#444;letter-spacing:0.14px;'>Dowód</span>
<span class="t" style='left:763.0px;top:111px;font:400 11.7px/13px "Liberation Sans",sans-serif;color:#444;letter-spacing:0.16px;'>wpłaty</span>
<span class="t" style='left:102.5px;top:128px;font:400 11.7px/13px "Liberation Sans",sans-serif;color:#8a8a8a;letter-spacing:0.12px;'>Druki pocztowe</span>
<span class="t" style='left:319.5px;top:128px;font:400 11.7px/13px "Liberation Sans",sans-serif;color:#8a8a8a;letter-spacing:-0.12px;'>Etykiety</span>
<span class="t" style='left:564.5px;top:128px;font:400 11.7px/13px "Liberation Sans",sans-serif;color:#8a8a8a;letter-spacing:0.17px;'>Druki firmowe</span>
<span class="t" style='left:42.8px;top:211px;font:700 13px/15px "DejaVu Sans","Liberation Sans",sans-serif;color:#fff;letter-spacing:0.01px;'>Panel główny</span>
<span class="t" style='left:42.8px;top:255px;font:400 13px/15px "DejaVu Sans","Liberation Sans",sans-serif;color:#b8c7ce;letter-spacing:0.03px;'>Nowy Dokument</span>
<span class="t" style='left:42.8px;top:299px;font:400 13px/15px "DejaVu Sans","Liberation Sans",sans-serif;color:#b8c7ce;'>Najczęściej używane</span>
<span class="t" style='left:42.8px;top:342px;font:400 13px/15px "DejaVu Sans","Liberation Sans",sans-serif;color:#b8c7ce;letter-spacing:-0.01px;'>Listy i Raporty</span>
<span class="t" style='left:42.8px;top:386px;font:400 13px/15px "DejaVu Sans","Liberation Sans",sans-serif;color:#b8c7ce;letter-spacing:-0.17px;'>Ustawienia</span>
<span class="t" style='left:42.8px;top:429px;font:400 13px/15px "DejaVu Sans","Liberation Sans",sans-serif;color:#b8c7ce;letter-spacing:0.03px;'>Ważne</span>
<span class="t" style='left:42.8px;top:473px;font:400 13px/15px "DejaVu Sans","Liberation Sans",sans-serif;color:#b8c7ce;letter-spacing:-0.15px;'>Aktualności</span>
<span class="t" style='left:65.2px;top:638px;font:700 29px/32px "Liberation Sans",sans-serif;color:#fff;letter-spacing:-0.30px;-webkit-text-stroke:1px #fff;transform:scaleX(1.17);transform-origin:0 0;'>rafsoft</span>
<span class="t" style='left:169.0px;top:638px;font:400 29px/32px "Liberation Sans",sans-serif;color:#fff;letter-spacing:0.47px;'>net</span>
<span class="t" style='left:64.0px;top:668px;font:700 7.6px/9px "Liberation Sans",sans-serif;color:#fff;letter-spacing:0.58px;font-style:italic;'>Oprogramowanie dla firm</span>
<span class="t" style='left:276.8px;top:171px;font:400 17px/20px "DejaVu Sans","Liberation Sans",sans-serif;color:#fff;letter-spacing:0.10px;-webkit-text-stroke:0.35px #fff;'>Nowy Dokument</span>
<span class="t" style='left:276.8px;top:393px;font:400 17px/20px "DejaVu Sans","Liberation Sans",sans-serif;color:#fff;letter-spacing:0.10px;-webkit-text-stroke:0.35px #fff;'>Najczęściej używane</span>
<span class="t" style='left:657.7px;top:171px;font:400 17px/20px "DejaVu Sans","Liberation Sans",sans-serif;color:#fff;letter-spacing:0.10px;-webkit-text-stroke:0.35px #fff;'>Listy i Raporty</span>
<span class="t" style='left:1036.0px;top:178px;font:400 16px/19px "DejaVu Sans","Liberation Sans",sans-serif;color:#111;letter-spacing:-0.22px;-webkit-text-stroke:0.3px #111;'>Ważne</span>
<span class="t" style='left:1150.0px;top:178px;font:400 16px/19px "DejaVu Sans","Liberation Sans",sans-serif;color:#fff;letter-spacing:-0.13px;-webkit-text-stroke:0.3px #fff;'>Aktualności</span>
<span class="t" style='left:285.5px;top:215px;font:700 12px/14px "DejaVu Sans","Liberation Sans",sans-serif;color:#5c5c5c;letter-spacing:-0.60px;'>Sprzedaż [F5]</span>
<span class="t" style='left:285.5px;top:255px;font:700 12px/14px "DejaVu Sans","Liberation Sans",sans-serif;color:#5c5c5c;letter-spacing:-0.36px;'>Zakupu [F6]</span>
<span class="t" style='left:285.5px;top:295px;font:700 12px/14px "DejaVu Sans","Liberation Sans",sans-serif;color:#5c5c5c;letter-spacing:-0.21px;'>Zamówienie</span>
<span class="t" style='left:285.5px;top:335px;font:700 12px/14px "DejaVu Sans","Liberation Sans",sans-serif;color:#5c5c5c;letter-spacing:-0.55px;'>Nowa Faktura</span>
<span class="t" style='left:285.5px;top:437px;font:700 12px/14px "DejaVu Sans","Liberation Sans",sans-serif;color:#5c5c5c;letter-spacing:-0.45px;'>Lista dokumentów</span>
<span class="t" style='left:285.5px;top:476px;font:700 12px/14px "DejaVu Sans","Liberation Sans",sans-serif;color:#5c5c5c;letter-spacing:-0.30px;'>Wyszukaj</span>
<span class="t" style='left:285.5px;top:517px;font:700 12px/14px "DejaVu Sans","Liberation Sans",sans-serif;color:#5c5c5c;letter-spacing:-0.15px;'>Cennik</span>
<span class="t" style='left:285.5px;top:557px;font:700 12px/14px "DejaVu Sans","Liberation Sans",sans-serif;color:#5c5c5c;letter-spacing:0.04px;'>Lista firm [F3]</span>
<span class="t" style='left:285.5px;top:597px;font:700 12px/14px "DejaVu Sans","Liberation Sans",sans-serif;color:#5c5c5c;letter-spacing:0.05px;'>Raport kasowy [F11]</span>
<span class="t" style='left:664.0px;top:557px;font:700 12px/14px "DejaVu Sans","Liberation Sans",sans-serif;color:#5c5c5c;letter-spacing:0.04px;'>Kopia zapasowa [Ctrl + B]</span>
<span class="t" style='left:1024.3px;top:242px;font:700 12px/14px "DejaVu Sans","Liberation Sans",sans-serif;color:#666;letter-spacing:0.08px;'>Witaj w programie Faktura VAT 2023</span>
<span class="t" style='left:1024.3px;top:270px;font:700 12px/14px "DejaVu Sans","Liberation Sans",sans-serif;color:#666;'>PRO</span>
<span class="t" style='left:1024.3px;top:299px;font:700 12px/14px "DejaVu Sans","Liberation Sans",sans-serif;color:#666;letter-spacing:0.02px;'>Dzisiaj jest 09 listopad 2022 .</span>
<span class="t" style='left:1024.3px;top:329px;font:700 12px/14px "DejaVu Sans","Liberation Sans",sans-serif;color:#666;letter-spacing:0.01px;'>Ostatnia archiwizacja:</span>
<span class="t" style='left:1182.0px;top:329px;font:700 12px/14px "DejaVu Sans","Liberation Sans",sans-serif;color:#222;letter-spacing:0.33px;text-decoration:underline;'>02-03-2007</span>
<span class="t" style='left:1024.3px;top:377px;font:700 12px/14px "DejaVu Sans","Liberation Sans",sans-serif;color:#111;letter-spacing:-0.11px;'>SPRZEDAŻ</span>
<span class="t" style='left:1024.3px;top:408px;font:700 12px/14px "DejaVu Sans","Liberation Sans",sans-serif;color:#666;letter-spacing:-0.09px;'>Miesiąc listopad netto 0,00 zł , brutto</span>
<span class="t" style='left:1024.3px;top:437px;font:700 12px/14px "DejaVu Sans","Liberation Sans",sans-serif;color:#666;letter-spacing:-0.02px;'>0,00 zł</span>
<span class="t" style='left:1024.3px;top:466px;font:700 12px/14px "DejaVu Sans","Liberation Sans",sans-serif;color:#666;letter-spacing:-0.03px;'>W poprzednim miesiącu netto: 0,00 zł ,</span>
<span class="t" style='left:1024.3px;top:494px;font:700 12px/14px "DejaVu Sans","Liberation Sans",sans-serif;color:#666;letter-spacing:-0.03px;'>brutto 0,00 zł</span>
<span class="t" style='left:1024.3px;top:523px;font:700 12px/14px "DejaVu Sans","Liberation Sans",sans-serif;color:#666;letter-spacing:0.07px;'>Największa w BRAK RAPORTU brutto</span>
<span class="t" style='left:1024.3px;top:551px;font:700 12px/14px "DejaVu Sans","Liberation Sans",sans-serif;color:#666;letter-spacing:-0.02px;'>0,00 zł</span>
<span class="t" style='left:997.0px;top:690px;font:400 11px/13px "DejaVu Sans","Liberation Sans",sans-serif;color:#fff;letter-spacing:0.28px;'>Copyright 2022 by RAFSOFT.NET. Wszystkie prawa zastrzeżone.</span>
<span class="t" style='left:509.0px;top:712px;font:400 12px/14px "Liberation Sans",sans-serif;color:#f0f0f0;letter-spacing:-0.26px;'>2022-11-09</span>
<span class="t" style='left:578.0px;top:712px;font:400 12px/14px "Liberation Sans",sans-serif;color:#f0f0f0;letter-spacing:-0.66px;'>RAZEM NETTO: 0,00 PLN</span>
<span class="t" style='left:974.0px;top:712px;font:400 12px/14px "Liberation Sans",sans-serif;color:#f0f0f0;letter-spacing:-0.70px;'>RAZEM BRUTTO: 0,00 PLN</span>
</div>
<!-- dialog -->
<div class="a" id="dlg"></div>
<div class="a" id="dlgt"></div>
<div class="a" id="grid"></div>
<div class="a hc" style="left:353px;width:68px"></div>
<div class="a hc" style="left:421px;width:96px"></div>
<div class="a hc" style="left:517px;width:96px"></div>
<div class="a hc" style="left:613px;width:96px"></div>
<div class="a hc" style="left:709px;width:96px"></div>
<div class="a hc" style="left:805px;width:96px"></div>
<div class="a hc" style="left:901px;width:104px"></div>
<div class="a vl" style="left:421px"></div>
<div class="a vl" style="left:517px"></div>
<div class="a vl" style="left:613px"></div>
<div class="a vl" style="left:709px"></div>
<div class="a vl" style="left:805px"></div>
<div class="a vl" style="left:901px"></div>

<div class="a hl" style="top:250px"></div>
<div class="a hl" style="top:264px"></div>
<div class="a hl" style="top:278px"></div>
<div class="a hl" style="top:292px"></div>
<div class="a hl" style="top:306px"></div>
<div class="a hl" style="top:320px"></div>
<div class="a hl" style="top:334px"></div>
<div class="a hl" style="top:348px"></div>
<div class="a hl" style="top:362px"></div>
<div class="a hl" style="top:376px"></div>
<div class="a hl" style="top:390px"></div>
<div class="a hl" style="top:404px"></div>
<div class="a hl" style="top:418px"></div>
<div class="a hl" style="top:432px"></div>
<div class="a hl" style="top:446px"></div>
<div class="a hl" style="top:460px"></div>
<div class="a hl" style="top:474px"></div>
<div class="a hl" style="top:488px"></div>
<div class="a" style="left:1005px;top:219px;width:1px;height:275px;background:#e6e6e6"></div>
<div class="a" style="left:354px;top:493px;width:652px;height:1px;background:#ececec"></div>
<div class="a btn" style="left:351px"></div>
<div class="a btn" style="left:455px"></div>
<div class="a btn" style="left:559px"></div>
<div class="a btn" style="left:679px"></div>
<div class="a btn" style="left:911px"></div>
<svg width="1366" height="727" style="left:0;top:0"><path d="M1010 182.3L1020 192.3M1020 182.3L1010 192.3" stroke="#1a1a1a" stroke-width="1.1"/><path d="M376.4 516.6H383.4L387.0 520.2V531.6H376.4Z" fill="#fdfdfd" stroke="#8e9498" stroke-width="0.9"/><path d="M383.4 516.6V520.2H387.0" fill="#fff" stroke="#8e9498" stroke-width="0.8"/><path d="M379.9 521.1H385.0" stroke="#b9d7de" stroke-width="0.8"/><rect x="377.9" y="520.6" width="0.9" height="0.9" fill="#555"/><path d="M379.9 523.6H385.0" stroke="#b9d7de" stroke-width="0.8"/><rect x="377.9" y="523.1" width="0.9" height="0.9" fill="#555"/><path d="M379.9 526.1H385.0" stroke="#b9d7de" stroke-width="0.8"/><rect x="377.9" y="525.6" width="0.9" height="0.9" fill="#555"/><path d="M379.9 528.6H385.0" stroke="#b9d7de" stroke-width="0.8"/><rect x="377.9" y="528.1" width="0.9" height="0.9" fill="#555"/><path d="M384.6 521H388.4V524.6H392V528.4H388.4V532H384.6V528.4H381V524.6H384.6Z" fill="#4cc04a" stroke="#1f7a23" stroke-width="0.9" stroke-linejoin="round"/><path d="M478.6 516.6H486.4L490.0 520.2V531.6H478.6Z" fill="#fdfdfd" stroke="#8e9498" stroke-width="0.9"/><path d="M486.4 516.6V520.2H490.0" fill="#fff" stroke="#8e9498" stroke-width="0.8"/><path d="M482.1 521.1H488.0" stroke="#b9d7de" stroke-width="0.8"/><rect x="480.1" y="520.6" width="0.9" height="0.9" fill="#555"/><path d="M482.1 523.6H488.0" stroke="#b9d7de" stroke-width="0.8"/><rect x="480.1" y="523.1" width="0.9" height="0.9" fill="#555"/><path d="M482.1 526.1H488.0" stroke="#b9d7de" stroke-width="0.8"/><rect x="480.1" y="525.6" width="0.9" height="0.9" fill="#555"/><path d="M482.1 528.6H488.0" stroke="#b9d7de" stroke-width="0.8"/><rect x="480.1" y="528.1" width="0.9" height="0.9" fill="#555"/><path d="M481 529.3L482.3 525.3L491.6 516.4Q493 515.8 493.7 517.3Q494 518.2 493.4 518.8L484.6 528Z" fill="#6b8fe0" stroke="#3f5fb8" stroke-width="0.7" stroke-linejoin="round"/><path d="M481 529.3L482.3 525.3L484.6 528Z" fill="#e9d9b0" stroke="#555" stroke-width="0.4"/><path d="M586.3 516.6H592.9L596.5 520.2V531.6H586.3Z" fill="#fdfdfd" stroke="#8e9498" stroke-width="0.9"/><path d="M592.9 516.6V520.2H596.5" fill="#fff" stroke="#8e9498" stroke-width="0.8"/><path d="M589.8 521.1H594.5" stroke="#b9d7de" stroke-width="0.8"/><rect x="587.8" y="520.6" width="0.9" height="0.9" fill="#555"/><path d="M589.8 523.6H594.5" stroke="#b9d7de" stroke-width="0.8"/><rect x="587.8" y="523.1" width="0.9" height="0.9" fill="#555"/><path d="M589.8 526.1H594.5" stroke="#b9d7de" stroke-width="0.8"/><rect x="587.8" y="525.6" width="0.9" height="0.9" fill="#555"/><path d="M589.8 528.6H594.5" stroke="#b9d7de" stroke-width="0.8"/><rect x="587.8" y="528.1" width="0.9" height="0.9" fill="#555"/><rect x="591.4" y="524.9" width="10.2" height="3.9" rx="0.6" fill="#ea4a3a" stroke="#a3231a" stroke-width="0.8"/><defs><linearGradient id="pg" x1="0" y1="0" x2="0" y2="1"><stop offset="0" stop-color="#dedede"/><stop offset="0.55" stop-color="#a9a9a9"/><stop offset="1" stop-color="#6c6c6c"/></linearGradient></defs><rect x="707.2" y="516.3" width="5.8" height="5" fill="#fbfbfb" stroke="#9a9a9a" stroke-width="0.7"/><rect x="702.2" y="520.6" width="15.6" height="8.2" rx="0.8" fill="url(#pg)" stroke="#8a8a8a" stroke-width="0.6"/><path d="M702.6 523.6H717.4" stroke="#f0f0f0" stroke-width="0.7"/><rect x="706.6" y="526.2" width="7" height="4.6" fill="#f6f6f6" stroke="#555" stroke-width="0.8"/><path d="M708.2 528.4L709.8 529.6L711.6 528.4" stroke="#444" stroke-width="0.7" fill="none"/></svg>
<div class="lay">
<span class="t" style='left:338.6px;top:180px;font:400 12px/14px "Liberation Sans",sans-serif;color:#000;letter-spacing:-0.06px;'>Nota korygująca</span>
<span class="t" style='left:359.2px;top:222px;font:400 11px/12px "Liberation Sans",sans-serif;color:#000;letter-spacing:-0.56px;'>Numer</span>
<span class="t" style='left:426.0px;top:222px;font:400 11px/12px "Liberation Sans",sans-serif;color:#000;letter-spacing:0.12px;'>Rodzaj faktury</span>
<span class="t" style='left:522.0px;top:222px;font:400 11px/12px "Liberation Sans",sans-serif;color:#000;letter-spacing:0.03px;'>Numer faktury</span>
<span class="t" style='left:618.3px;top:222px;font:400 11px/12px "Liberation Sans",sans-serif;color:#000;letter-spacing:-0.02px;'>Data wystawie…</span>
<span class="t" style='left:714.5px;top:222px;font:400 11px/12px "Liberation Sans",sans-serif;color:#000;letter-spacing:-0.15px;'>Tresc 'przed'</span>
<span class="t" style='left:810.5px;top:222px;font:400 11px/12px "Liberation Sans",sans-serif;color:#000;letter-spacing:-0.22px;'>Tresc 'po'</span>
<span class="t" style='left:906.7px;top:222px;font:400 11px/12px "Liberation Sans",sans-serif;color:#000;letter-spacing:-0.15px;'>Faktura</span>
<span class="t" style='left:394.3px;top:519px;font:400 11px/12px "Liberation Sans",sans-serif;color:#000;letter-spacing:-0.17px;'><u>D</u>odaj</span>
<span class="t" style='left:496.7px;top:519px;font:400 11px/12px "Liberation Sans",sans-serif;color:#000;letter-spacing:0.04px;'><u>E</u>dytuj</span>
<span class="t" style='left:604.7px;top:519px;font:400 11px/12px "Liberation Sans",sans-serif;color:#000;letter-spacing:-0.69px;'><u>U</u>suń</span>
<span class="t" style='left:720.7px;top:519px;font:400 11px/12px "Liberation Sans",sans-serif;color:#000;letter-spacing:-0.13px;'>Drukuj</span>
<span class="t" style='left:940.8px;top:519px;font:400 11px/12px "Liberation Sans",sans-serif;color:#000;letter-spacing:-0.43px;'>Zamknij</span>
</div>
</body>
</html>
